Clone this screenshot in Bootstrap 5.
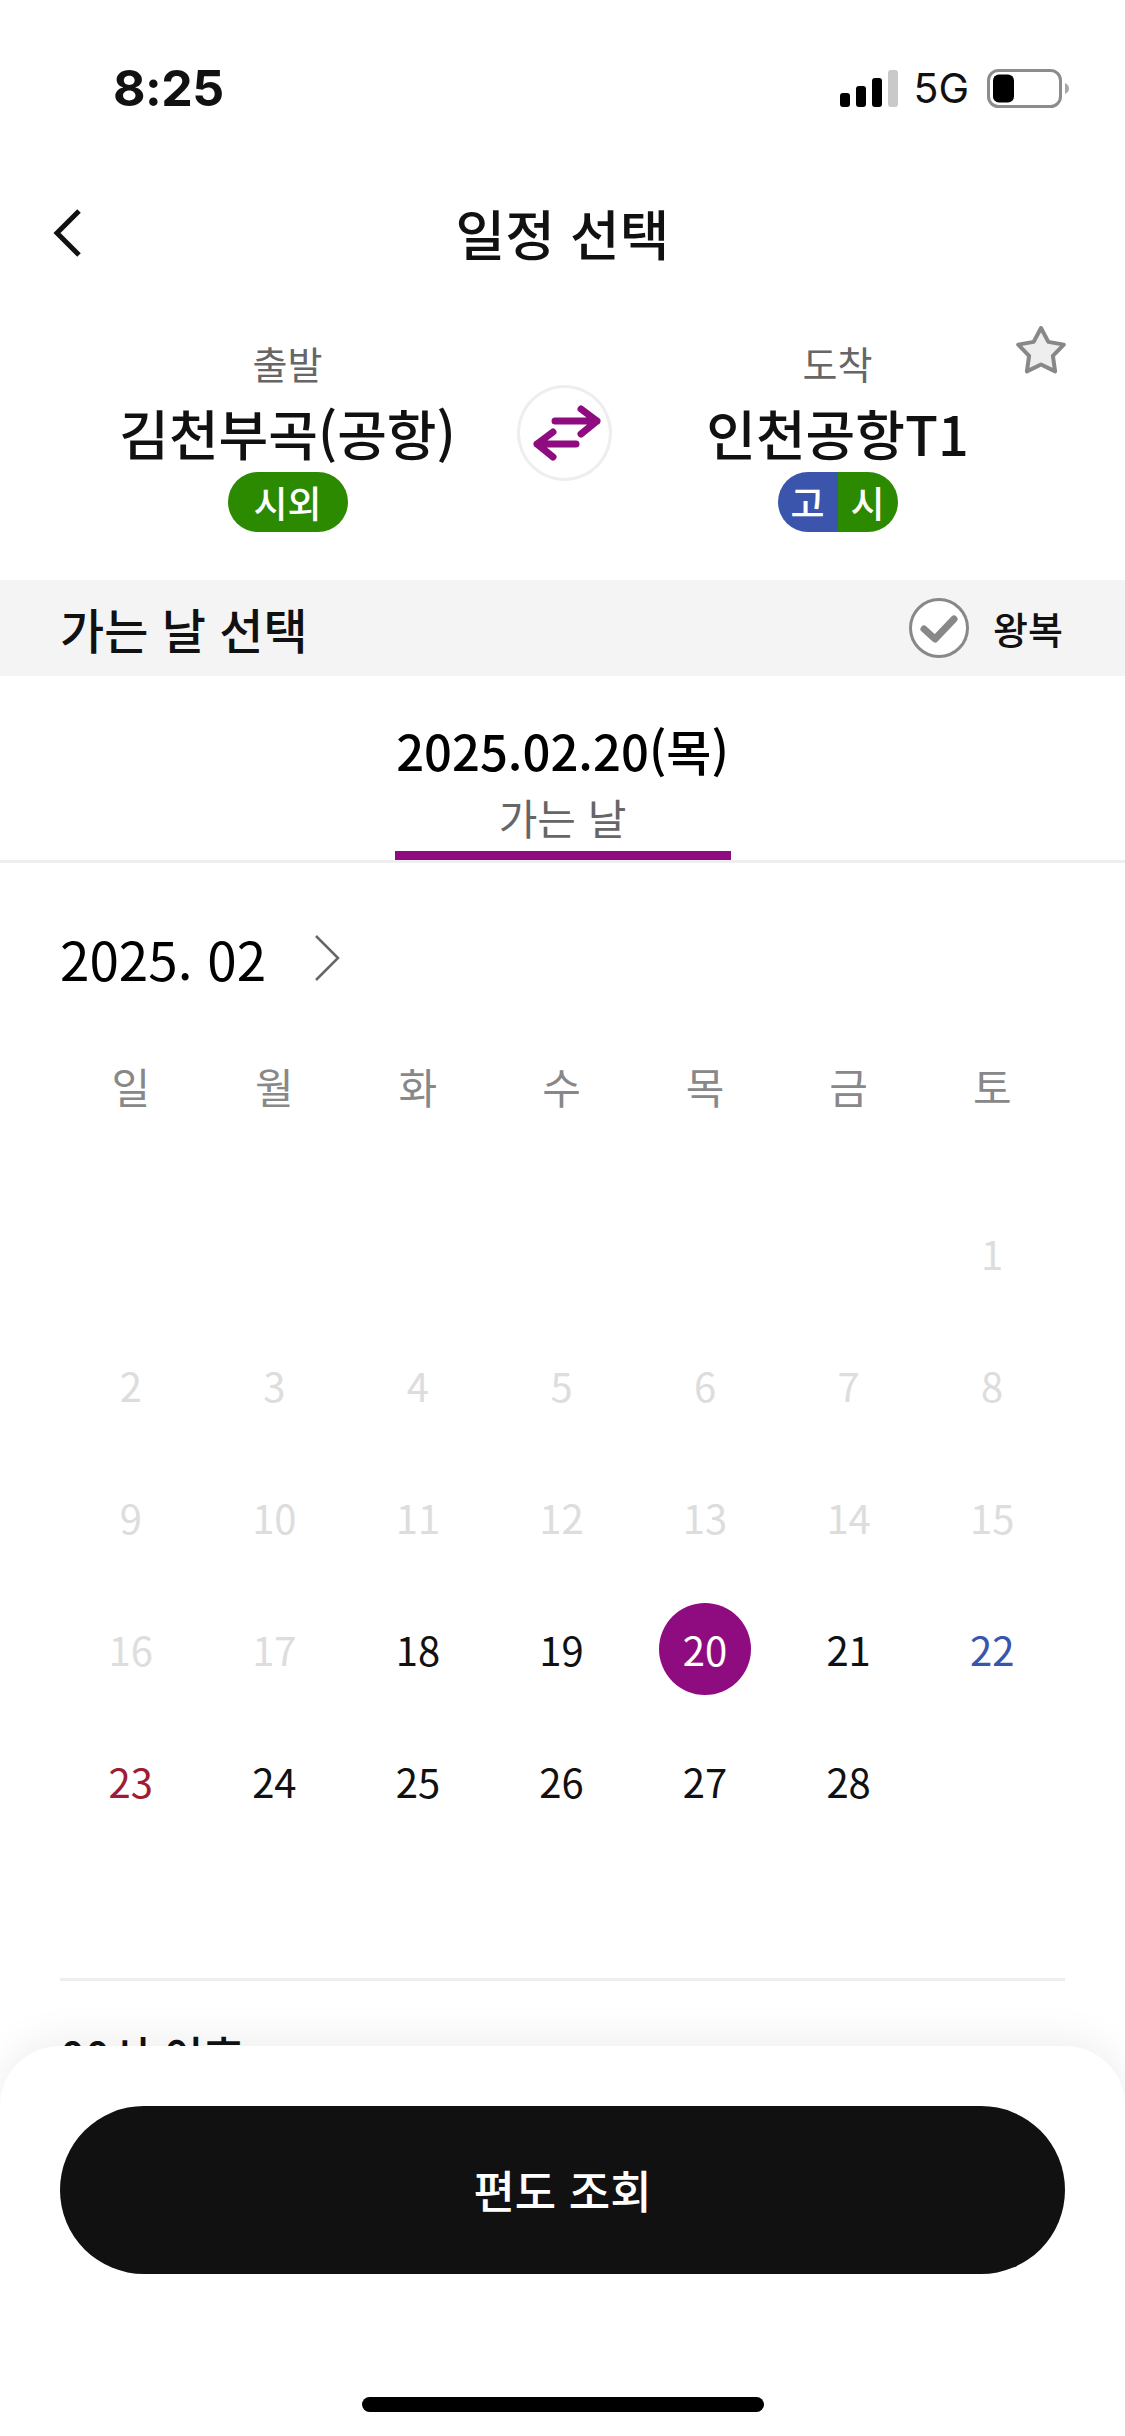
<!DOCTYPE html>
<html lang="ko">
<head>
  <meta charset="UTF-8" />
  <meta name="viewport" content="width=device-width, initial-scale=1.0"/>
  <title>일정 선택</title>
  <link href="https://cdn.jsdelivr.net/npm/bootstrap@5.3.2/dist/css/bootstrap.min.css" rel="stylesheet" />
  <style>
    html, body { margin: 0; background: #fff; }
    body { font-family: "Noto Sans CJK KR", "Noto Sans", sans-serif; color: #111; }
    .screen { width: 1125px; height: 2436px; overflow: hidden; }

    .status-bar { height: 176px; padding: 0 56px 0 113px; }
    .status-time { font-family: Inter, "Liberation Sans", sans-serif; font-weight: 700; font-size: 50px; line-height: 1; letter-spacing: -.5px; }
    .status-right { gap: 18px; }
    .signal-bars { margin-right: -3px; }
    .status-net { font-family: Inter, "Liberation Sans", sans-serif; font-size: 41px; line-height: 1; }

    .top-nav { height: 114px; padding: 0 53px; }
    .nav-side { width: 100px; }
    .nav-title { font-size: 54px; font-weight: 500; line-height: 1; }

    .route-box { height: 290px; padding: 48px 60px 0; }
    .route-label { font-size: 38px; line-height: 50px; color: #666; }
    .route-name { font-size: 54px; font-weight: 500; line-height: 78px; padding-top: 6px; white-space: nowrap; }
    .swap-btn { width: 95px; height: 96px; border: 3px solid #eee; border-radius: 50%; flex: none; background: #fff; margin: -4px -2px 0 2px; }
    .area-pill { height: 60px; width: 120px; border-radius: 30px; overflow: hidden; color: #fff; font-size: 37px; font-weight: 500; line-height: 60px; }
    .area-si { background: #2c8a00; }
    .area-go { background: #3a55ab; }
    .fav-star { top: 34px; right: 57px; }

    .pick-bar { height: 96px; padding: 0 62px 0 60px; background: #f4f4f4; }
    .pick-title { font-size: 48px; font-weight: 500; line-height: 1; }
    .trip-gap { gap: 24px; }
    .trip-label { font-size: 38px; font-weight: 500; line-height: 1; }

    .date-tab { height: 187px; border-bottom: 3px solid #eee; }
    .tab-inner { width: 336px; height: 184px; padding-top: 45px; border-bottom: 9px solid #8f0c80; }
    .tab-date { font-size: 49px; font-weight: 500; line-height: 58px; white-space: nowrap; color: #000; }
    .tab-label { font-size: 42px; line-height: 60px; margin-top: 8px; color: #666; }

    .cal-box { padding: 0 60px; }
    .cal-month { height: 190px; gap: 48px; }
    .month-text { font-size: 53px; line-height: 1; color: #000; }
    .cal-week, .cal-days { display: grid; grid-template-columns: repeat(7, 1fr); text-align: center; }
    .cal-week { color: #888; font-size: 42px; line-height: 60px; margin: 3px 1px 71px -1px; }
    .cal-days { grid-auto-rows: 132px; font-size: 40px; margin: 0 1px 0 -1px; }
    .cal-days > div { display: flex; align-items: center; justify-content: center; }
    .day-off { color: #ddd; }
    .day-sat { color: #3a55ab; }
    .day-sun { color: #a01c34; }
    .day-on { width: 92px; height: 92px; border-radius: 50%; background: #8f0c80; color: #fff; }
    .cal-rule { height: 3px; background: #eee; margin-top: 131px; }
    .after-text { font-size: 44px; font-weight: 500; line-height: 1; margin-top: 52px; white-space: nowrap; }

    .bottom-sheet { left: 0; right: 0; top: 2046px; height: 390px; background: #fff; border-radius: 60px 60px 0 0; box-shadow: 0 -6px 40px rgba(0,0,0,.07); padding: 60px 60px 0; }
    .search-btn { height: 168px; border-radius: 84px; background: #111; border: 0; color: #fff; font-size: 45px; font-weight: 500; }
    .search-btn:hover { background: #111; color: #fff; }
    .home-bar { left: 362px; top: 351px; width: 402px; height: 15px; border-radius: 8px; background: #000; }
  </style>
</head>
<body>
  <div class="screen position-relative">

    <div class="status-bar d-flex align-items-center justify-content-between">
      <div class="status-time">8:25</div>
      <div class="status-right d-flex align-items-center">
        <svg class="signal-bars" width="58" height="37" viewBox="0 0 58 37">
          <rect x="0" y="23" width="10" height="14" rx="3" fill="#000"/>
          <rect x="16" y="16" width="10" height="21" rx="3" fill="#000"/>
          <rect x="32" y="8" width="10" height="29" rx="3" fill="#000"/>
          <rect x="48" y="0" width="10" height="37" rx="3" fill="#c9c9c9"/>
        </svg>
        <span class="status-net">5G</span>
        <svg width="82" height="39" viewBox="0 0 82 39">
          <rect x="1.500" y="1.500" width="72" height="36" rx="10" fill="#fff" stroke="#8c8c8c" stroke-width="3"/>
          <rect x="6" y="5.500" width="21" height="28" rx="6" fill="#000"/>
          <path d="M78 14v11c2.500-1 4-3 4-5.500s-1.500-4.500-4-5.500z" fill="#a8a8a8"/>
        </svg>
      </div>
    </div>

    <div class="top-nav d-flex align-items-center">
      <div class="nav-side">
        <svg width="30" height="48" viewBox="0 0 30 48" class="d-block"><path d="M26 2 4 24l22 22" fill="none" stroke="#111" stroke-width="5"/></svg>
      </div>
      <div class="nav-title flex-fill text-center">일정 선택</div>
      <div class="nav-side"></div>
    </div>

    <div class="route-box position-relative">
      <div class="d-flex align-items-center">
        <div class="flex-fill w-50 d-flex flex-column align-items-center">
          <div class="route-label">출발</div>
          <div class="route-name">김천부곡(공항)</div>
          <div class="area-pill area-si text-center">시외</div>
        </div>
        <div class="swap-btn d-flex align-items-center justify-content-center">
          <svg class="ms-1" width="68" height="58" viewBox="0 0 68 58">
            <path d="M22 17h42M48 5l16 12-16 13M43 40H4M20 28 4 40l16 13" fill="none" stroke="#8f0c80" stroke-width="7" stroke-linecap="round" stroke-linejoin="round"/>
          </svg>
        </div>
        <div class="flex-fill w-50 d-flex flex-column align-items-center">
          <div class="route-label">도착</div>
          <div class="route-name">인천공항T1</div>
          <div class="area-pill d-flex text-center">
            <div class="area-go w-50">고</div>
            <div class="area-si w-50">시</div>
          </div>
        </div>
      </div>
      <svg class="fav-star position-absolute" width="54" height="52" viewBox="0 0 54 52">
        <path d="M27 4 34.350 17.900 49.800 20.600 38.900 31.900 41.100 47.400 27 40.500 12.900 47.400 15.100 31.900 4.200 20.600 19.650 17.900z" fill="#eee" stroke="#888" stroke-width="4" stroke-linejoin="round"/>
      </svg>
    </div>

    <div class="pick-bar d-flex align-items-center justify-content-between">
      <div class="pick-title">가는 날 선택</div>
      <div class="trip-gap d-flex align-items-center">
        <svg width="60" height="60" viewBox="0 0 60 60">
          <circle cx="30" cy="30" r="28.500" fill="#fff" stroke="#888" stroke-width="3"/>
          <path d="M15 31l11 10 19-20" fill="none" stroke="#888" stroke-width="7" stroke-linecap="round" stroke-linejoin="round"/>
        </svg>
        <div class="trip-label">왕복</div>
      </div>
    </div>

    <div class="date-tab d-flex justify-content-center">
      <div class="tab-inner text-center">
        <div class="tab-date">2025.02.20(목)</div>
        <div class="tab-label">가는 날</div>
      </div>
    </div>

    <div class="cal-box">
      <div class="cal-month d-flex align-items-center">
        <div class="month-text">2025. 02</div>
        <svg width="26" height="48" viewBox="0 0 26 48"><path d="M2 2l22 22L2 46" fill="none" stroke="#666" stroke-width="2.500"/></svg>
      </div>

      <div class="cal-week">
        <div>일</div><div>월</div><div>화</div><div>수</div><div>목</div><div>금</div><div>토</div>
      </div>

      <div class="cal-days">
        <div></div><div></div><div></div><div></div><div></div><div></div><div class="day-off">1</div>
        <div class="day-off">2</div><div class="day-off">3</div><div class="day-off">4</div><div class="day-off">5</div><div class="day-off">6</div><div class="day-off">7</div><div class="day-off">8</div>
        <div class="day-off">9</div><div class="day-off">10</div><div class="day-off">11</div><div class="day-off">12</div><div class="day-off">13</div><div class="day-off">14</div><div class="day-off">15</div>
        <div class="day-off">16</div><div class="day-off">17</div><div>18</div><div>19</div><div><span class="day-on d-flex align-items-center justify-content-center">20</span></div><div>21</div><div class="day-sat">22</div>
        <div class="day-sun">23</div><div>24</div><div>25</div><div>26</div><div>27</div><div>28</div><div></div>
      </div>

      <div class="cal-rule"></div>
      <div class="after-text">00시 이후</div>
    </div>

    <div class="bottom-sheet position-absolute">
      <button type="button" class="btn search-btn w-100">편도 조회</button>
      <div class="home-bar position-absolute"></div>
    </div>
  </div>

  <script src="https://cdn.jsdelivr.net/npm/bootstrap@5.3.2/dist/js/bootstrap.bundle.min.js"></script>
</body>
</html>
